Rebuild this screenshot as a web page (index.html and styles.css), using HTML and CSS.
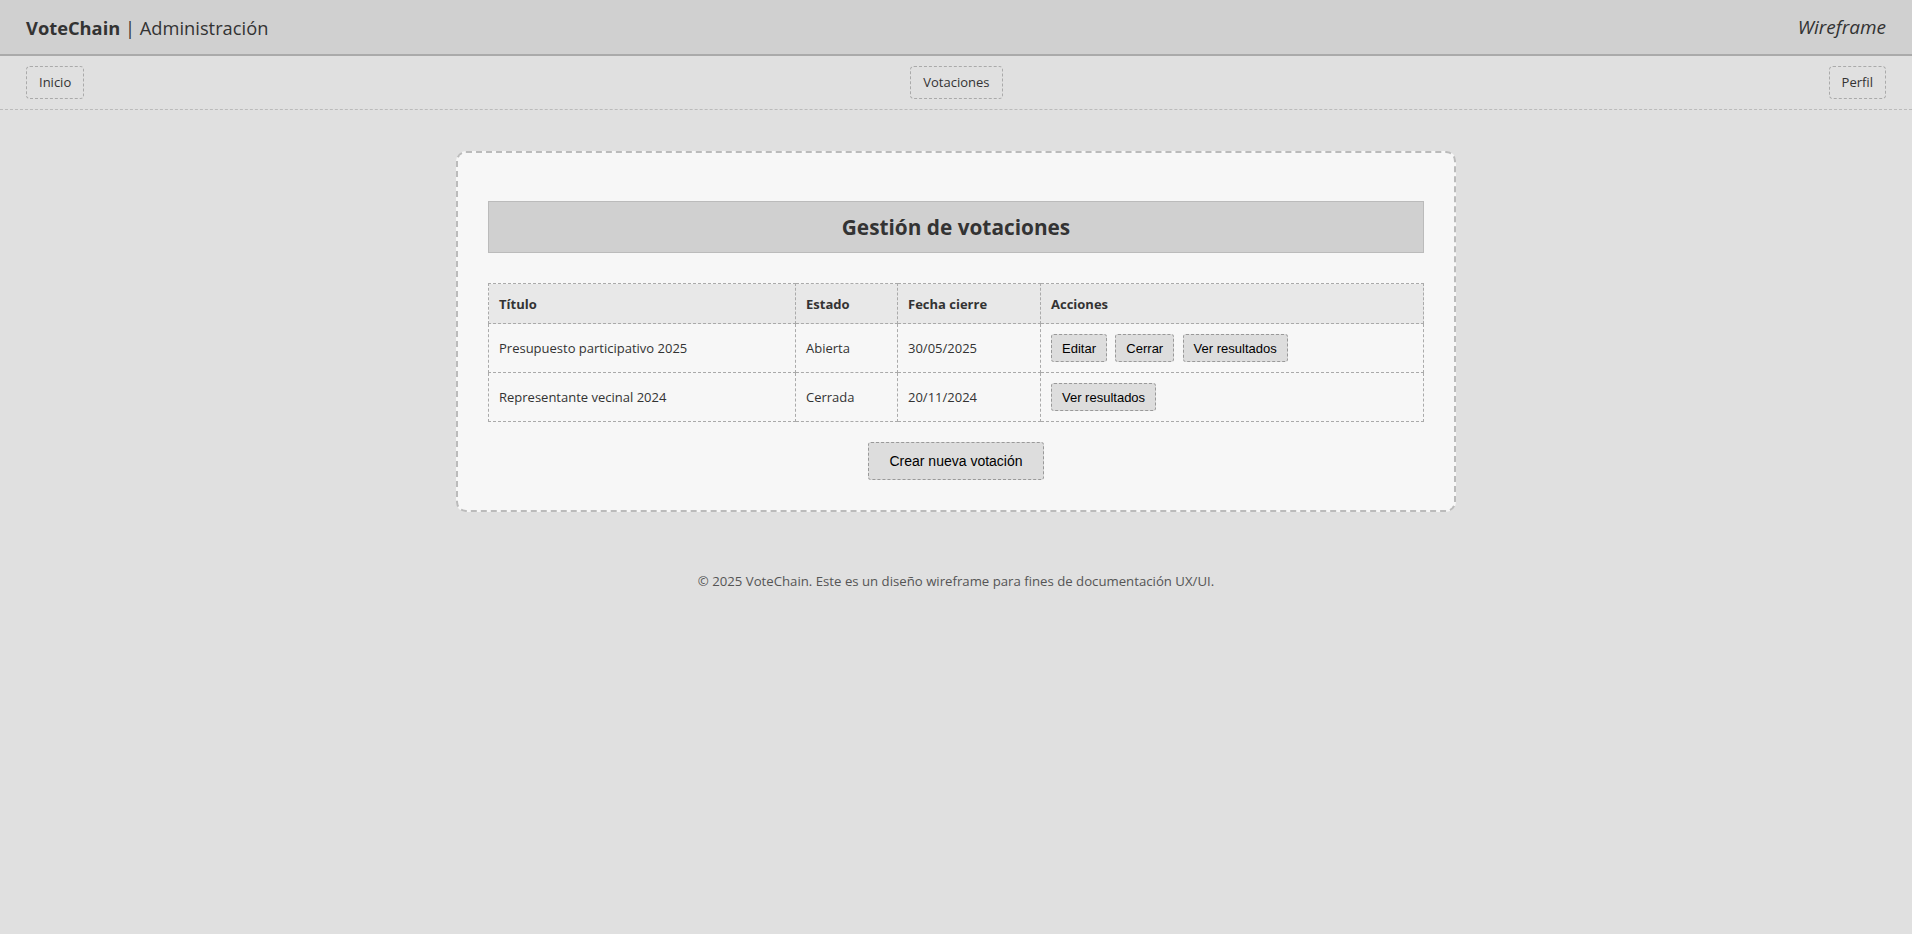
FILE: index.html
```html
<!DOCTYPE html>
<html lang="es">
<head>
<meta charset="utf-8">
<title>VoteChain | Administración</title>
<link rel="stylesheet" href="styles.css">
</head>
<body>
<header class="topbar">
  <div class="brand"><strong>VoteChain</strong> | Administración</div>
  <div class="tag">Wireframe</div>
</header>
<nav class="nav">
  <a class="nav-btn">Inicio</a>
  <a class="nav-btn">Votaciones</a>
  <a class="nav-btn">Perfil</a>
</nav>
<main class="card">
  <h2 class="card-title">Gestión de votaciones</h2>
  <table class="votes">
    <thead>
      <tr><th class="c1">Título</th><th class="c2">Estado</th><th class="c3">Fecha cierre</th><th class="c4">Acciones</th></tr>
    </thead>
    <tbody>
      <tr>
        <td>Presupuesto participativo 2025</td><td>Abierta</td><td>30/05/2025</td>
        <td><button class="btn">Editar</button> <button class="btn">Cerrar</button> <button class="btn">Ver resultados</button></td>
      </tr>
      <tr>
        <td>Representante vecinal 2024</td><td>Cerrada</td><td>20/11/2024</td>
        <td><button class="btn">Ver resultados</button></td>
      </tr>
    </tbody>
  </table>
  <div class="actions"><button class="btn btn-main">Crear nueva votación</button></div>
</main>
<footer class="footer">© 2025 VoteChain. Este es un diseño wireframe para fines de documentación UX/UI.</footer>
</body>
</html>
```
FILE: styles.css
```css
* { box-sizing: border-box; }
html, body { margin: 0; padding: 0; }
body {
  background: #e0e0e0;
  font-family: "Open Sans", "Noto Sans", sans-serif;
  color: #333;
}
.topbar {
  height: 56px;
  background: #d0d0d0;
  border-bottom: 2px solid #aaa;
  display: flex;
  align-items: center;
  justify-content: space-between;
  padding: 0 26px;
}
.brand { font-size: 18.3px; color: #333; }
.brand strong { font-weight: 700; }
.tag { font-size: 19px; font-style: italic; color: #333; }
.nav {
  display: flex;
  justify-content: space-between;
  align-items: center;
  padding: 10px 26px;
  border-bottom: 1px dashed #bbb;
}
.nav-btn {
  display: inline-block;
  border: 1px dashed #aaa;
  border-radius: 4px;
  padding: 8px 12px;
  font-size: 13px;
  line-height: 15px;
  color: #333;
}
.card {
  width: 1000px;
  margin: 41px auto 0;
  background: #f7f7f7;
  border: 2px dashed #bbb;
  border-radius: 10px;
  padding: 30px;
}
.card-title {
  margin: 18px 0 30px;
  background: #d0d0d0;
  border: 1px solid #bbb;
  text-align: center;
  font-size: 20.8px;
  font-weight: 700;
  height: 52px;
  line-height: 50px;
  color: #333;
}
.votes {
  width: 100%;
  border-collapse: collapse;
  table-layout: fixed;
  font-size: 13px;
}
.votes th, .votes td {
  border: 1px dashed #aaa;
  padding: 10px;
  text-align: left;
}
.votes th { background: #e8e8e8; font-weight: 700; height: 40px; }
.votes td { height: 41px; }
.c1 { width: 307px; }
.c2 { width: 102px; }
.c3 { width: 143px; }
.btn {
  font-family: "Liberation Sans", Arial, sans-serif;
  font-size: 13px;
  background: #ddd;
  border: 1px dashed #999;
  border-radius: 3px;
  padding: 0 10px;
  height: 28px;
  color: #000;
  margin-right: 5px;
}
.actions { text-align: center; margin-top: 20px; }
.btn-main {
  font-size: 14px;
  height: 38px;
  padding: 0 20px;
  margin-right: 0;
}
.footer {
  text-align: center;
  font-size: 13.2px;
  color: #555;
  margin-top: 60px;
}
```
